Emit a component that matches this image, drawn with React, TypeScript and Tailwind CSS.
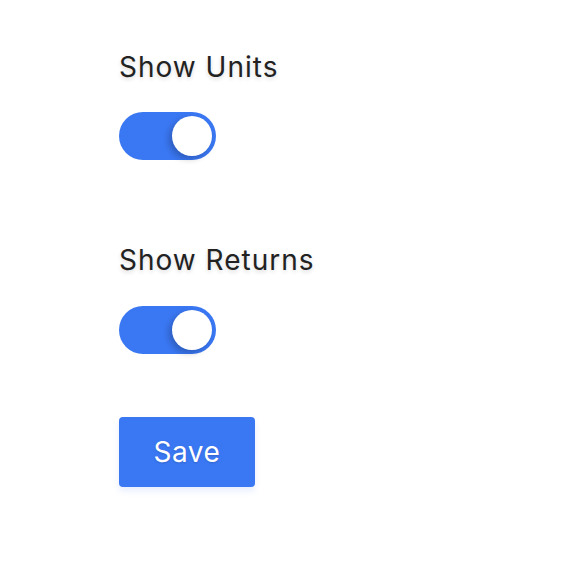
import { useState } from 'react';

function Toggle({ on, onChange }: { on: boolean; onChange: (v: boolean) => void }) {
  return (
    <button
      type="button"
      onClick={() => onChange(!on)}
      className={`relative block h-[48px] w-[97px] rounded-full transition-colors ${on ? 'bg-[#3a77f2]' : 'bg-[#d1d5db]'}`}
    >
      <span
        className={`absolute top-[4px] h-[40px] w-[40px] rounded-full bg-white shadow-[-3px_3px_6px_rgba(0,0,0,0.22)] transition-all ${on ? 'left-[53px]' : 'left-[4px]'}`}
      />
    </button>
  );
}

export default function App() {
  const [showUnits, setShowUnits] = useState(true);
  const [showReturns, setShowReturns] = useState(true);

  return (
    <div className="min-h-[580px] bg-white pl-[119px] pt-[47px] font-['Inter','Liberation_Sans',sans-serif]">
      <div className="flex flex-col items-start">
        <label className="text-[28px] leading-[40px] tracking-[1px] text-[#222] [text-shadow:0_2px_4px_rgba(0,0,0,0.15)]">
          Show Units
        </label>
        <div className="mt-[25px] flex">
          <Toggle on={showUnits} onChange={setShowUnits} />
        </div>

        <label className="mt-[80px] text-[28px] leading-[40px] tracking-[1px] text-[#222] [text-shadow:0_2px_4px_rgba(0,0,0,0.15)]">
          Show Returns
        </label>
        <div className="mt-[26px] flex">
          <Toggle on={showReturns} onChange={setShowReturns} />
        </div>

        <button
          type="button"
          className="mt-[63px] h-[70px] w-[136px] rounded-[4px] bg-[#3a77f2] text-[28px] tracking-[0.5px] text-white shadow-[0_4px_6px_rgba(58,119,242,0.12)] [text-shadow:0_1px_2px_rgba(0,0,0,0.15)]"
        >
          Save
        </button>
      </div>
    </div>
  );
}
